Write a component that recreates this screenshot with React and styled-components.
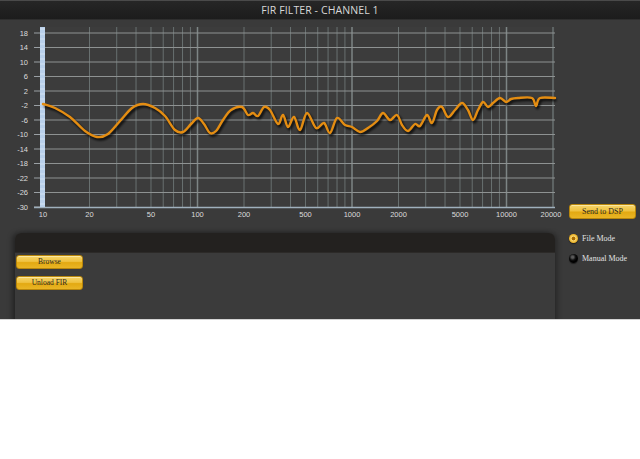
import React from "react";
import styled, { createGlobalStyle } from "styled-components";

const Global = createGlobalStyle`
  html, body { margin: 0; padding: 0; background: #ffffff; }
  #root { width: 640px; }
`;

const Screen = styled.div`
  width: 640px;
  height: 320px;
  background: #3a3a3a;
  overflow: hidden;
  display: flex;
  flex-direction: column;
  border-bottom: 1px solid #d4d4d4;
  box-sizing: border-box;
`;

const Header = styled.div`
  height: 20px;
  flex: none;
  background: linear-gradient(#262626, #1c1c1c);
  border-top: 1px solid #4a4a4a;
  border-bottom: 1px solid #2e2e2e;
  box-sizing: border-box;
  display: flex;
  align-items: center;
  justify-content: center;
  color: #d8d8d8;
  font-family: "Open Sans", "Liberation Sans", sans-serif;
  font-size: 10.5px;
  letter-spacing: 0.1px;
`;

const Body = styled.div`
  display: grid;
  grid-template-columns: 560px 80px;
  flex: 1;
  min-height: 0;
`;

const LeftCol = styled.div`
  display: flex;
  flex-direction: column;
`;

const ChartSvg = styled.svg`
  display: block;
  width: 560px;
  height: 205px;
  flex: none;
  overflow: visible;
`;

const Panel = styled.div`
  margin: 8px 0 0 15px;
  width: 540px;
  height: 140px;
  border-radius: 6px 6px 0 0;
  background: #3b3b3b;
  box-shadow: -3px 0 5px rgba(0, 0, 0, 0.35), 3px 0 5px rgba(0, 0, 0, 0.25);
  overflow: hidden;
  display: flex;
  flex-direction: column;
`;

const PanelBar = styled.div`
  height: 20px;
  flex: none;
  background: #23211f;
  border-bottom: 1px solid #2c2a28;
  box-sizing: border-box;
`;

const PanelBody = styled.div`
  display: flex;
  flex-direction: column;
  gap: 7px;
  padding: 2px 0 0 1px;
`;

const GoldButton = styled.button`
  width: ${(p) => p.$w}px;
  height: ${(p) => p.$h}px;
  padding: 0;
  border: 1px solid #b8860b;
  border-radius: 3px;
  background: linear-gradient(#f6d56a 0%, #efc241 45%, #e3a911 55%, #e9b526 100%);
  color: #2e2a1e;
  font-family: "Liberation Serif", serif;
  font-size: ${(p) => p.$fs}px;
  line-height: 1;
  box-shadow: inset 0 1px 0 rgba(255, 245, 200, 0.6);
  cursor: pointer;
`;

const RightCol = styled.div`
  display: flex;
  flex-direction: column;
  padding: 184px 0 0 9px;
`;

const RadioList = styled.div`
  display: flex;
  flex-direction: column;
  margin-top: 14px;
  gap: 10px;
`;

const RadioRow = styled.div`
  display: flex;
  align-items: center;
  gap: 4px;
  height: 10px;
  color: #e2e2e2;
  font-family: "Liberation Serif", serif;
  font-size: 8px;
`;

const RadioDot = styled.span`
  width: 9px;
  height: 9px;
  border-radius: 50%;
  flex: none;
  box-sizing: border-box;
  background: ${(p) =>
    p.$on
      ? "radial-gradient(circle at 50% 50%, #a86a00 0 1.6px, #f7d36a 2.2px, #e9ad1c 4.5px)"
      : "radial-gradient(circle at 40% 35%, #5a5a5a 0 1px, #111 3px, #000 4.5px)"};
  box-shadow: 0 1px 1px rgba(0, 0, 0, 0.5);
`;

// ---------- chart math ----------
const X0 = 43;
const DEC = 154.5;
const fx = (f) => X0 + Math.log10(f / 10) * DEC;
const dy = (db) => 33 + (18 - db) * 3.625;

const gridFreqs = [];
[10, 100, 1000, 10000].forEach((d) => {
  for (let i = 1; i <= 9; i++) {
    const f = d * i;
    if (f <= 20000) gridFreqs.push(f);
  }
});
gridFreqs.push(20000);

const dbs = [];
for (let v = 18; v >= -30; v -= 4) dbs.push(v);

const xLabels = [10, 20, 50, 100, 200, 500, 1000, 2000, 5000, 10000, 20000];

const pts = [
  [43, 104], [55, 108], [70, 117], [85, 131], [97, 137], [108, 134], [120, 121],
  [132, 108], [143, 104], [155, 108], [165, 116], [175, 130], [183, 132], [191, 124],
  [198, 118], [204, 124], [210, 133], [216, 131], [223, 120], [231, 110], [242, 107],
  [248, 115], [253, 113], [258, 116], [264, 107], [270, 110], [278, 124], [283, 115],
  [288, 127], [294, 117], [300, 130], [307, 113], [316, 128], [324, 123], [330, 133],
  [337, 118], [345, 125], [352, 127], [360, 132], [368, 128], [377, 121], [383, 113],
  [390, 120], [397, 115], [402, 125], [408, 131], [415, 124], [420, 126], [427, 115],
  [432, 123], [437, 110], [442, 107], [448, 117], [455, 110], [462, 103], [468, 110],
  [473, 120], [478, 110], [483, 102], [488, 107], [493, 103], [500, 98], [506, 102],
  [511, 99], [518, 98], [532, 98], [536, 106], [540, 98], [555, 98],
];

function smoothPath(p) {
  let d = `M${p[0][0]},${p[0][1]}`;
  for (let i = 0; i < p.length - 1; i++) {
    const p0 = p[i - 1] || p[i];
    const p1 = p[i];
    const p2 = p[i + 1];
    const p3 = p[i + 2] || p2;
    const t = 6;
    const c1x = p1[0] + (p2[0] - p0[0]) / t;
    const c1y = p1[1] + (p2[1] - p0[1]) / t;
    const c2x = p2[0] - (p3[0] - p1[0]) / t;
    const c2y = p2[1] - (p3[1] - p1[1]) / t;
    d += ` C${c1x.toFixed(1)},${c1y.toFixed(1)} ${c2x.toFixed(1)},${c2y.toFixed(1)} ${p2[0]},${p2[1]}`;
  }
  return d;
}

const curve = smoothPath(pts);

function Chart() {
  const axisFont = { fontFamily: "'Liberation Sans', Arial, sans-serif", fontSize: 7.5 };
  return (
    <ChartSvg viewBox="0 20 560 205">
      <defs>
        <filter id="sh" x="-5%" y="-20%" width="110%" height="140%">
          <feGaussianBlur stdDeviation="1" />
        </filter>
      </defs>
      <rect x={43} y={27} width={512} height={180} fill="#3c3c3c" />
      {gridFreqs.map((f) => {
        const decade = [10, 100, 1000, 10000].includes(f);
        return (
          <line
            key={"v" + f}
            x1={fx(f)}
            x2={fx(f)}
            y1={27}
            y2={207}
            stroke={decade ? "#7d8585" : "#687070"}
            strokeWidth={decade ? 1.5 : 1}
          />
        );
      })}
      {dbs.slice(0, -1).map((v) => (
        <line key={"h" + v} x1={43} x2={555} y1={dy(v)} y2={dy(v)} stroke="#8e9292" strokeWidth={1.2} />
      ))}
      {dbs.map((v) => (
        <g key={"l" + v}>
          <line x1={34} x2={41} y1={dy(v)} y2={dy(v)} stroke="#9aa0a4" strokeWidth={1} />
          <text x={28} y={dy(v) + 2.6} textAnchor="end" fill="#dcdcdc" style={axisFont}>
            {v}
          </text>
        </g>
      ))}
      <line x1={34} x2={555} y1={207.5} y2={207.5} stroke="#9fb0bd" strokeWidth={1.5} />
      <rect x={40} y={27} width={5} height={180} fill="#b9d0ea" />
      {Array.from({ length: 36 }).map((_, i) => (
        <line key={"t" + i} x1={40} x2={45} y1={29 + i * 5} y2={29 + i * 5} stroke="#dbe8f6" strokeWidth={0.8} />
      ))}
      {xLabels.map((f) => (
        <text key={"x" + f} x={f === 20000 ? fx(f) - 2 : fx(f)} y={217} textAnchor="middle" fill="#dcdcdc" style={axisFont}>
          {f}
        </text>
      ))}
      <path d={curve} fill="none" stroke="#000" strokeOpacity={0.75} strokeWidth={3} transform="translate(1.5,2)" filter="url(#sh)" />
      <path d={curve} fill="none" stroke="#e48d12" strokeWidth={2.4} strokeLinejoin="round" strokeLinecap="round" />
    </ChartSvg>
  );
}

export default function App() {
  return (
    <>
      <Global />
      <Screen>
        <Header>FIR FILTER - CHANNEL 1</Header>
        <Body>
          <LeftCol>
            <Chart />
            <Panel>
              <PanelBar />
              <PanelBody>
                <GoldButton $w={67} $h={14} $fs={7.5}>Browse</GoldButton>
                <GoldButton $w={67} $h={14} $fs={7.5}>Unload FIR</GoldButton>
              </PanelBody>
            </Panel>
          </LeftCol>
          <RightCol>
            <GoldButton $w={67} $h={15} $fs={8}>Send to DSP</GoldButton>
            <RadioList>
              <RadioRow>
                <RadioDot $on />
                File Mode
              </RadioRow>
              <RadioRow>
                <RadioDot />
                Manual Mode
              </RadioRow>
            </RadioList>
          </RightCol>
        </Body>
      </Screen>
    </>
  );
}
